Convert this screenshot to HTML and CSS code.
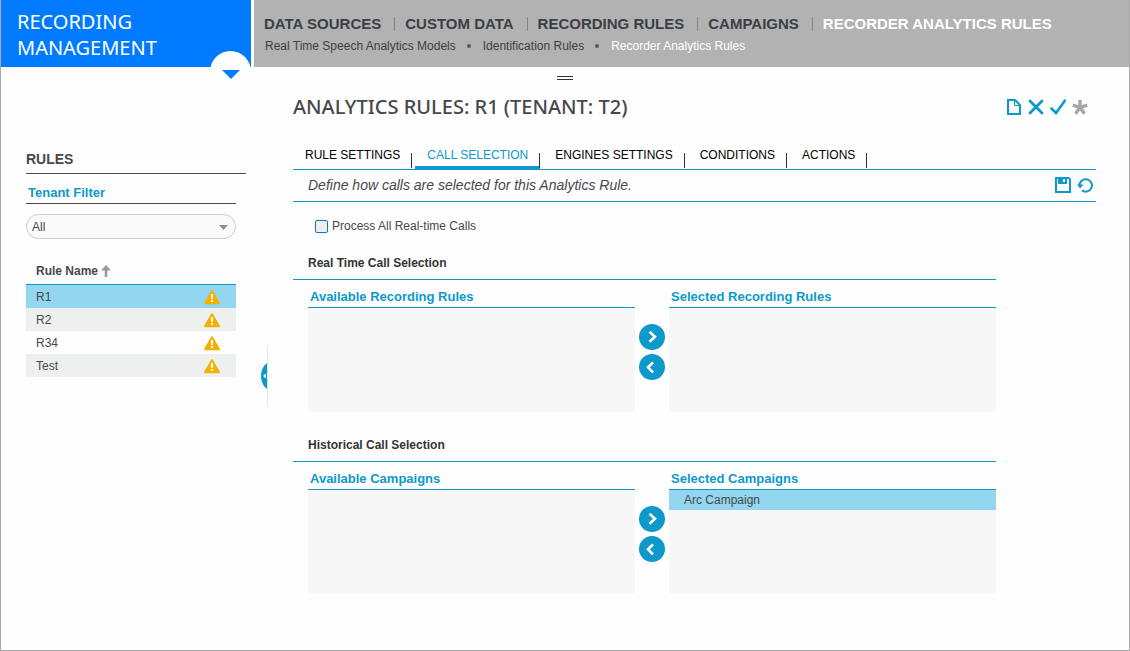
FILE: index.html
```html
<!DOCTYPE html>
<html lang="en">
<head>
<meta charset="utf-8">
<title>Recording Management</title>
<link rel="stylesheet" href="styles.css">
</head>
<body>
<svg class="defs" aria-hidden="true">
  <symbol id="warning" viewBox="0 0 16 15">
    <path d="M8 1.200 15 13.200H1Z" fill="#f6b100" stroke="#f6b100" stroke-width="2" stroke-linejoin="round"/>
    <path d="M7 4h2v5H7zM7 10h2v2H7z" fill="#fff"/>
  </symbol>
  <symbol id="next" viewBox="0 0 26 26"><path d="m10.500 7.800 5.500 5-5.500 5" fill="none" stroke="#fff" stroke-width="2.600"/></symbol>
  <symbol id="prev" viewBox="0 0 26 26"><path d="m14 8.300-5 5 5 5" fill="none" stroke="#fff" stroke-width="2.600"/></symbol>
</svg>
<div class="app">
  <header class="header">
    <div class="brand">
      <h1 class="brand-title">RECORDING MANAGEMENT</h1>
      <button class="brand-menu" type="button" aria-label="Switch module">
        <svg width="18" height="9" viewBox="0 0 18 9"><path d="M0 0h18L9 9Z" fill="#007bff"/></svg>
      </button>
    </div>
    <div class="navs">
      <nav class="nav" aria-label="Sections">
        <a class="nav-link" href="#">DATA SOURCES</a>
        <a class="nav-link" href="#">CUSTOM DATA</a>
        <a class="nav-link" href="#">RECORDING RULES</a>
        <a class="nav-link" href="#">CAMPAIGNS</a>
        <a class="nav-link current" href="#">RECORDER ANALYTICS RULES</a>
      </nav>
      <nav class="subnav" aria-label="Pages">
        <a class="subnav-link" href="#">Real Time Speech Analytics Models</a>
        <a class="subnav-link" href="#">Identification Rules</a>
        <a class="subnav-link current" href="#">Recorder Analytics Rules</a>
      </nav>
    </div>
  </header>
  <button class="grip" type="button" aria-label="Collapse header"></button>
  <div class="content">
    <aside class="sidebar">
      <h2 class="sidebar-title">RULES</h2>
      <div class="filter">
        <label class="filter-label" for="tenant">Tenant Filter</label>
        <div class="select-wrap">
          <select class="select" id="tenant"><option>All</option></select>
          <svg class="select-arrow" width="9" height="5" viewBox="0 0 9 5"><path d="M0 0h9L4.500 5Z" fill="#909090"/></svg>
        </div>
        <table class="rules">
          <thead><tr><th colspan="2">Rule Name <svg class="sort" width="10" height="12" viewBox="0 0 10 12"><path d="M5 12V4" fill="none" stroke="#999" stroke-width="2.600"/><path d="M5 0 10 5.500H0Z" fill="#999"/></svg></th></tr></thead>
          <tbody>
            <tr class="selected"><td>R1</td><td class="state"><svg width="16" height="15"><use href="#warning"/></svg></td></tr>
            <tr><td>R2</td><td class="state"><svg width="16" height="15"><use href="#warning"/></svg></td></tr>
            <tr><td>R34</td><td class="state"><svg width="16" height="15"><use href="#warning"/></svg></td></tr>
            <tr><td>Test</td><td class="state"><svg width="16" height="15"><use href="#warning"/></svg></td></tr>
          </tbody>
        </table>
      </div>
    </aside>
    <div class="splitter">
      <button class="splitter-button" type="button" aria-label="Collapse sidebar">
        <svg width="6" height="26" viewBox="0 0 6 26"><path d="M6 0C2 3 0 8 0 13s2 10 6 13Z" fill="#0d99cb"/><path d="M5 10.500v5L2 13Z" fill="#fff"/></svg>
      </button>
    </div>
    <main class="main">
      <div class="title-row">
        <h2 class="title">ANALYTICS RULES: R1 (TENANT: T2)</h2>
        <div class="actions">
          <button class="icon" type="button" aria-label="New"><svg width="16" height="16" viewBox="0 0 16 16"><path d="M2 1h7l5 5v9H2Z" fill="none" stroke="#0d99cb" stroke-width="2"/><path d="M8.500 1v5.500H14" fill="none" stroke="#0d99cb"/></svg></button>
          <button class="icon" type="button" aria-label="Delete"><svg width="16" height="16" viewBox="0 0 16 16"><path d="m2 2 12 12M14 2 2 14" fill="none" stroke="#0d99cb" stroke-width="2.800" stroke-linecap="round"/></svg></button>
          <button class="icon" type="button" aria-label="Activate"><svg width="16" height="16" viewBox="0 0 16 16"><path d="m1.500 9.500 4.500 4.500 9-12.500" fill="none" stroke="#0d99cb" stroke-width="2.600" stroke-linecap="round"/></svg></button>
          <button class="icon" type="button" aria-label="Options"><svg width="16" height="16" viewBox="0 0 16 16"><path d="M8 8.500V1M8 8.500.8 6.200M8 8.500l7.200-2.300M8 8.500l-4.500 6.200M8 8.500l4.500 6.200" fill="none" stroke="#a6a6a6" stroke-width="3.400"/></svg></button>
        </div>
      </div>
      <div class="tabs" role="tablist">
        <button class="tab" type="button" role="tab">RULE SETTINGS</button>
        <button class="tab active" type="button" role="tab" aria-selected="true">CALL SELECTION</button>
        <button class="tab" type="button" role="tab">ENGINES SETTINGS</button>
        <button class="tab" type="button" role="tab">CONDITIONS</button>
        <button class="tab" type="button" role="tab">ACTIONS</button>
      </div>
      <div class="intro">
        <p class="intro-text">Define how calls are selected for this Analytics Rule.</p>
        <div class="intro-actions">
          <button class="icon" type="button" aria-label="Save"><svg width="16" height="16" viewBox="0 0 16 16"><path d="M0 0h14l2 2v14H0Z" fill="#0d99cb"/><path d="M2 2h1v5h9V2h2v12H2ZM8 2h2v3H8Z" fill="#fff"/></svg></button>
          <button class="icon" type="button" aria-label="Revert"><svg width="16" height="16" viewBox="0 0 16 16"><path d="M2.500 9A6.200 6.200 0 1 1 5 13.400" fill="none" stroke="#0d99cb" stroke-width="2"/><path d="M0 7.500h6.500L3 11.500Z" fill="#0d99cb"/></svg></button>
        </div>
      </div>
      <label class="check"><input class="checkbox" type="checkbox">Process All Real-time Calls</label>
      <section class="section">
        <h3 class="section-title">Real Time Call Selection</h3>
        <div class="transfer">
          <div class="list"><h4 class="list-title">Available Recording Rules</h4><ul class="items"></ul></div>
          <div class="movers">
            <button class="mover" type="button" aria-label="Add rule"><svg width="26" height="26"><use href="#next"/></svg></button>
            <button class="mover" type="button" aria-label="Remove rule"><svg width="26" height="26"><use href="#prev"/></svg></button>
          </div>
          <div class="list"><h4 class="list-title">Selected Recording Rules</h4><ul class="items"></ul></div>
        </div>
      </section>
      <section class="section">
        <h3 class="section-title">Historical Call Selection</h3>
        <div class="transfer">
          <div class="list"><h4 class="list-title">Available Campaigns</h4><ul class="items"></ul></div>
          <div class="movers">
            <button class="mover" type="button" aria-label="Add campaign"><svg width="26" height="26"><use href="#next"/></svg></button>
            <button class="mover" type="button" aria-label="Remove campaign"><svg width="26" height="26"><use href="#prev"/></svg></button>
          </div>
          <div class="list"><h4 class="list-title">Selected Campaigns</h4><ul class="items"><li class="item">Arc Campaign</li></ul></div>
        </div>
      </section>
    </main>
  </div>
</div>
</body>
</html>
```
FILE: styles.css
```css
* { box-sizing: border-box; }
body {
  margin: 0;
  background: #fefefe;
  color: #46484b;
  font: 12px/16px "Liberation Sans", Arial, sans-serif;
}
h1, h2, h3, h4, p, ul { margin: 0; padding: 0; }
ul { list-style: none; }
a { color: inherit; text-decoration: none; }
button { border: 0; padding: 0; background: none; color: inherit; font: inherit; }
svg { display: block; }
.defs { position: absolute; width: 0; height: 0; }

.app {
  min-height: 100vh;
  border: 1px solid #a9a9a9;
  border-top: 0;
}

.header { display: flex; gap: 3px; height: 67px; }
.brand {
  position: relative;
  flex: none;
  width: 250px;
  padding: 9px 16px;
  background: #007bff;
  color: #fff;
}
.brand-title { font: 20px/26px "Trebuchet MS", "Noto Sans", sans-serif; }
.brand-menu {
  position: absolute;
  right: 0;
  bottom: -25px;
  display: flex;
  justify-content: center;
  width: 41px;
  height: 41px;
  padding-top: 19px;
  border-radius: 50%;
  background: #fefefe;
}
.navs { flex: 1; padding: 14px 10px; background: #b2b2b2; }
.nav { display: flex; font-size: 15px; line-height: 20px; font-weight: bold; color: #3b3f45; }
.nav-link { display: flex; align-items: center; white-space: nowrap; }
.nav-link + .nav-link::before {
  content: "";
  height: 14px;
  margin: 0 10px 0 13px;
  border-left: 1px solid #7f8a93;
}
.subnav { display: flex; padding: 4px 1px; color: #3b3f45; }
.subnav-link { display: flex; align-items: center; white-space: nowrap; }
.subnav-link + .subnav-link::before {
  content: "";
  width: 4px;
  height: 4px;
  margin: 0 12px 0 11px;
  border-radius: 50%;
  background: #55585c;
}
.nav .current, .subnav .current { color: #fff; }

.grip {
  display: block;
  width: 16px;
  height: 4px;
  margin: 9px auto 0;
  border: solid #333;
  border-width: 1px 0;
}

.content { display: flex; }
.sidebar { flex: none; width: 245px; padding: 71px 0 0 25px; }
.sidebar-title {
  padding-bottom: 6px;
  border-bottom: 1px solid #4a4b4e;
  font-size: 14px;
  font-weight: bold;
}
.filter { margin-right: 10px; }
.filter-label {
  display: block;
  padding: 11px 2px 2px;
  border-bottom: 1px solid #4a4b4e;
  color: #0d99cb;
  font-size: 13px;
  font-weight: bold;
}
.select-wrap { position: relative; margin-top: 10px; }
.select {
  display: block;
  width: 100%;
  height: 25px;
  padding: 0 24px 0 5px;
  appearance: none;
  border: 1px solid #ccc;
  border-radius: 13px;
  background: #fafafa;
  color: inherit;
  font: inherit;
}
.select-arrow { position: absolute; right: 8px; top: 11px; }
.rules { width: 100%; margin-top: 20px; border-spacing: 0; }
.rules th {
  height: 26px;
  padding: 0 10px 1px;
  border-bottom: 1px solid #0d99cb;
  text-align: left;
}
.sort { display: inline-block; vertical-align: -2px; }
.rules td { height: 23px; padding: 1px 10px 0; }
.rules .state { width: 42px; padding: 2px 16px 0 10px; }
.rules tbody tr:nth-child(even) { background: #eef0ef; }
.rules tbody .selected { background: #93d6ef; }

.splitter {
  flex: none;
  display: flex;
  align-items: center;
  align-self: flex-start;
  justify-content: flex-end;
  width: 22px;
  height: 60px;
  margin-top: 266px;
  border-right: 1px solid #dbe8f1;
}

.main { flex: 1; min-width: 0; padding: 15px 33px 24px 25px; }
.title-row { display: flex; align-items: center; justify-content: space-between; height: 24px; }
.title { font: 500 20px/24px "Trebuchet MS", "Noto Sans", sans-serif; }
.actions { display: flex; gap: 6px; padding-right: 8px; }
.icon { display: block; }

.tabs { display: flex; align-items: flex-end; gap: 3px; margin-top: 27px; border-bottom: 1px solid #0d99cb; color: #000; }
.tab {
  display: flex;
  align-items: flex-start;
  height: 23px;
  padding: 1px 0 0 12px;
  border-bottom: 3px solid transparent;
}
.tab::after {
  content: "";
  height: 15px;
  margin: 6px 0 0 11px;
  border-left: 1px solid #333;
}
.tab.active { color: #0d99cb; border-color: #0d99cb; }
.intro {
  display: flex;
  align-items: center;
  justify-content: space-between;
  height: 32px;
  padding: 0 3px 2px 15px;
  border-bottom: 1px solid #0d99cb;
}
.intro-text { font-size: 14px; font-style: italic; }
.intro-actions { display: flex; gap: 6px; }

.check { display: flex; align-items: center; gap: 4px; margin: 16px 0 0 22px; }
.checkbox {
  appearance: none;
  width: 13px;
  height: 13px;
  margin: 1px 0 0;
  border: 1px solid #0d7ab5;
  border-radius: 2px;
  background: #efefef;
}
.section { margin: 0 100px 24px 0; }
.section-title {
  padding: 21px 15px 8px;
  border-bottom: 1px solid #0d99cb;
  color: #333;
  font-size: 12px;
  font-weight: bold;
}
.section + .section .section-title { padding-top: 1px; }
.transfer { display: flex; padding: 9px 0 0 15px; }
.list { flex: 1; min-width: 0; }
.list-title {
  padding: 0 2px 2px;
  border-bottom: 1px solid #0d99cb;
  color: #0d99cb;
  font-size: 13px;
  font-weight: bold;
}
.items { min-height: 104px; border-radius: 0 0 3px 3px; background: #f7f7f7; }
.item { padding: 2px 15px; background: #93d6ef; }
.movers { display: flex; flex-direction: column; gap: 4px; padding: 35px 4px 0; }
.mover { width: 26px; height: 26px; border-radius: 50%; background: #0d99cb; }
```
